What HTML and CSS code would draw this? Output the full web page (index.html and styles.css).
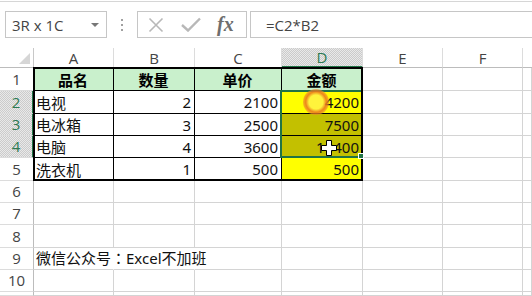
FILE: index.html
```html
<!DOCTYPE html>
<html>
<head>
<meta charset="utf-8">
<link rel="stylesheet" href="styles.css">
</head>
<body>
<div class="toolbar">
  <div class="topline"></div>
  <div class="fbar">
    <div class="namebox"><span class="nb-text">3R x 1C</span><span class="caret"></span></div>
    <div class="dots"><i></i><i></i><i></i></div>
    <div class="fxbox">
      <svg class="ic-x" width="16" height="16" viewBox="0 0 16 16"><path d="M1.5 1.5 L14.5 14.5 M14.5 1.5 L1.5 14.5" stroke="#b8b8b8" stroke-width="1.6" fill="none"/></svg>
      <svg class="ic-ok" width="20" height="15" viewBox="0 0 20 15"><path d="M1 8 L7 13.5 L19 1.5" stroke="#b8b8b8" stroke-width="2.4" fill="none"/></svg>
      <span class="fx">fx</span>
    </div>
    <div class="formula">=C2*B2</div>
  </div>
</div>
<div class="sheet">
  <div class="grid">
    <div class="corner"></div><div class="ch">A</div><div class="ch">B</div><div class="ch">C</div><div class="ch on">D</div><div class="ch">E</div><div class="ch">F</div><div class="ch end"></div>

    <div class="rh">1</div><div class="cell t th">品名</div><div class="cell t th">数量</div><div class="cell t th">单价</div><div class="cell t th">金额</div><div class="cell"></div><div class="cell"></div><div class="cell"></div>

    <div class="rh on">2</div><div class="cell t">电视</div><div class="cell t num">2</div><div class="cell t num">2100</div><div class="cell t num yel">4200</div><div class="cell"></div><div class="cell"></div><div class="cell"></div>

    <div class="rh on">3</div><div class="cell t">电冰箱</div><div class="cell t num">3</div><div class="cell t num">2500</div><div class="cell t num sel">7500</div><div class="cell"></div><div class="cell"></div><div class="cell"></div>

    <div class="rh on">4</div><div class="cell t">电脑</div><div class="cell t num">4</div><div class="cell t num">3600</div><div class="cell t num sel">10400</div><div class="cell"></div><div class="cell"></div><div class="cell"></div>

    <div class="rh">5</div><div class="cell t">洗衣机</div><div class="cell t num">1</div><div class="cell t num">500</div><div class="cell t num yel">500</div><div class="cell"></div><div class="cell"></div><div class="cell"></div>

    <div class="rh">6</div><div class="cell"></div><div class="cell"></div><div class="cell"></div><div class="cell"></div><div class="cell"></div><div class="cell"></div><div class="cell"></div>

    <div class="rh">7</div><div class="cell"></div><div class="cell"></div><div class="cell"></div><div class="cell"></div><div class="cell"></div><div class="cell"></div><div class="cell"></div>

    <div class="rh">8</div><div class="cell"></div><div class="cell"></div><div class="cell"></div><div class="cell"></div><div class="cell"></div><div class="cell"></div><div class="cell"></div>

    <div class="rh">9</div><div class="cell open">微信公众号<span class="cjk">：</span>Excel不加班</div><div class="cell open"></div><div class="cell"></div><div class="cell"></div><div class="cell"></div><div class="cell"></div><div class="cell"></div>

    <div class="rh">10</div><div class="cell"></div><div class="cell"></div><div class="cell"></div><div class="cell"></div><div class="cell"></div><div class="cell"></div><div class="cell"></div>

    <div class="rh"></div><div class="cell"></div><div class="cell"></div><div class="cell"></div><div class="cell"></div><div class="cell"></div><div class="cell"></div><div class="cell"></div>
  </div>
  <div class="selection"></div>
  <div class="table-frame"></div>
  <div class="fill-handle"></div>
  <div class="click-ring"></div>
  <svg class="cursor" width="16" height="16" viewBox="0 0 16 16"><path d="M5.5 0.5 H10.5 V5.5 H15.5 V10.5 H10.5 V15.5 H5.5 V10.5 H0.5 V5.5 H5.5 Z" fill="#fff" stroke="#000" stroke-width="1"/></svg>
</div>
</body>
</html>
```

FILE: styles.css
```css
html, body {
  margin: 0;
  padding: 0;
  background: #fff;
  width: 532px;
  height: 296px;
  overflow: hidden;
  font-family: "Noto Sans", "Noto Sans CJK SC", sans-serif;
}

.toolbar {
  height: 48px;
  box-sizing: border-box;
  padding-top: 1px;
}

.topline {
  height: 1px;
  background: #d6d6d6;
}

.fbar {
  margin-top: 9px;
  height: 27px;
  display: flex;
  align-items: stretch;
}

.namebox {
  margin-left: 5px;
  width: 102px;
  box-sizing: border-box;
  border: 1px solid #c6c6c6;
  display: flex;
  align-items: center;
  padding-left: 6px;
  padding-right: 7px;
  font-family: "Open Sans", sans-serif;
  font-size: 15px;
  color: #444;
}

.nb-text {
  flex: 1;
}

.caret {
  width: 0;
  height: 0;
  border-left: 4px solid transparent;
  border-right: 4px solid transparent;
  border-top: 4px solid #777;
}

.dots {
  width: 30px;
  display: flex;
  flex-direction: column;
  align-items: center;
  justify-content: center;
  gap: 3px;
}

.dots i {
  display: block;
  width: 2px;
  height: 2px;
  background: #a0a0a0;
}

.fxbox {
  width: 110px;
  box-sizing: border-box;
  border: 1px solid #c6c6c6;
  display: flex;
  align-items: center;
  padding-left: 10px;
}

.ic-x {
  margin-right: 17px;
}

.ic-ok {
  margin-right: 16px;
}

.fx {
  font-family: "Liberation Serif", serif;
  font-style: italic;
  font-weight: bold;
  font-size: 20px;
  color: #6e6e6e;
  line-height: 1;
  margin-top: -2px;
}

.formula {
  margin-left: 3px;
  flex: 1;
  box-sizing: border-box;
  border: 1px solid #c6c6c6;
  border-right: none;
  display: flex;
  align-items: center;
  padding-left: 15px;
  font-family: "Open Sans", sans-serif;
  font-size: 15px;
  color: #444;
}

.sheet {
  position: relative;
}

.grid {
  display: grid;
  grid-template-columns: 34px 80px 81px 87px 81px 80px 80px 9px;
  grid-template-rows: 20px 23px 23px 22px 22px 23px 22px 22px 23px 22px 22px 4px;
}

.corner {
  box-sizing: border-box;
  border-right: 1px solid #c8c8c8;
  border-bottom: 1px solid #bcbcbc;
  position: relative;
}

.corner::after {
  content: "";
  position: absolute;
  right: 3px;
  bottom: 3px;
  width: 11px;
  height: 11px;
  background: #d6d6d6;
  clip-path: polygon(100% 0, 100% 100%, 0 100%);
}

.ch {
  box-sizing: border-box;
  border-right: 1px solid #dcdcdc;
  border-bottom: 1px solid #bcbcbc;
  display: flex;
  align-items: center;
  justify-content: center;
  font-family: "Open Sans", sans-serif;
  font-size: 15px;
  color: #444;
}

.ch.end {
  border-right: none;
}

.ch.on,
.rh.on {
  background: repeating-conic-gradient(#cbcbcb 0 25%, #e9e9e9 0 50%) 0 0 / 2px 2px;
  color: #2c7a52;
}

.ch.on {
  border-bottom: 2px solid #217346;
}

.rh {
  box-sizing: border-box;
  border-right: 1px solid #bcbcbc;
  border-bottom: 1px solid #dcdcdc;
  display: flex;
  align-items: center;
  justify-content: center;
  font-family: "Open Sans", sans-serif;
  font-size: 15px;
  color: #444;
  padding-bottom: 1px;
}

.rh.on {
  border-right: 2px solid #217346;
}

.cell {
  box-sizing: border-box;
  border-right: 1px solid #d4d4d4;
  border-bottom: 1px solid #d4d4d4;
  display: flex;
  align-items: center;
  padding: 0 3px 0 2px;
  font-size: 15px;
  color: #111;
  white-space: nowrap;
  overflow: visible;
}

.cell.open {
  border-right-color: transparent;
  padding-bottom: 2px;
}

.cjk {
  font-family: "Noto Sans CJK TC", sans-serif;
}

.cell.t {
  border-right-color: #000;
  border-bottom-color: #000;
}

.cell.num {
  justify-content: flex-end;
}

.cell.th {
  background: #c9f0cc;
  font-weight: bold;
  justify-content: center;
  color: #000;
}

.cell.yel {
  background: #ffff00;
}

.cell.sel {
  background: #c3c000;
}

.selection {
  position: absolute;
  left: 280px;
  top: 42px;
  width: 83px;
  height: 68px;
  box-sizing: border-box;
  border: 2px solid #217346;
}

.table-frame {
  position: absolute;
  left: 33px;
  top: 19px;
  width: 330px;
  height: 114px;
  box-sizing: border-box;
  border: 2px solid #000;
}

.fill-handle {
  position: absolute;
  left: 358px;
  top: 105px;
  width: 6px;
  height: 6px;
  box-sizing: border-box;
  background: #217346;
  border: 1px solid #fff;
}

.click-ring {
  position: absolute;
  left: 303px;
  top: 41px;
  width: 26px;
  height: 26px;
  border-radius: 50%;
  background: radial-gradient(circle, rgba(255, 225, 150, 0.4) 0 38%, rgba(235, 120, 30, 0.9) 56%, rgba(240, 150, 60, 0.45) 76%, rgba(255, 200, 120, 0) 100%);
}

.cursor {
  position: absolute;
  left: 321px;
  top: 92px;
}
```
